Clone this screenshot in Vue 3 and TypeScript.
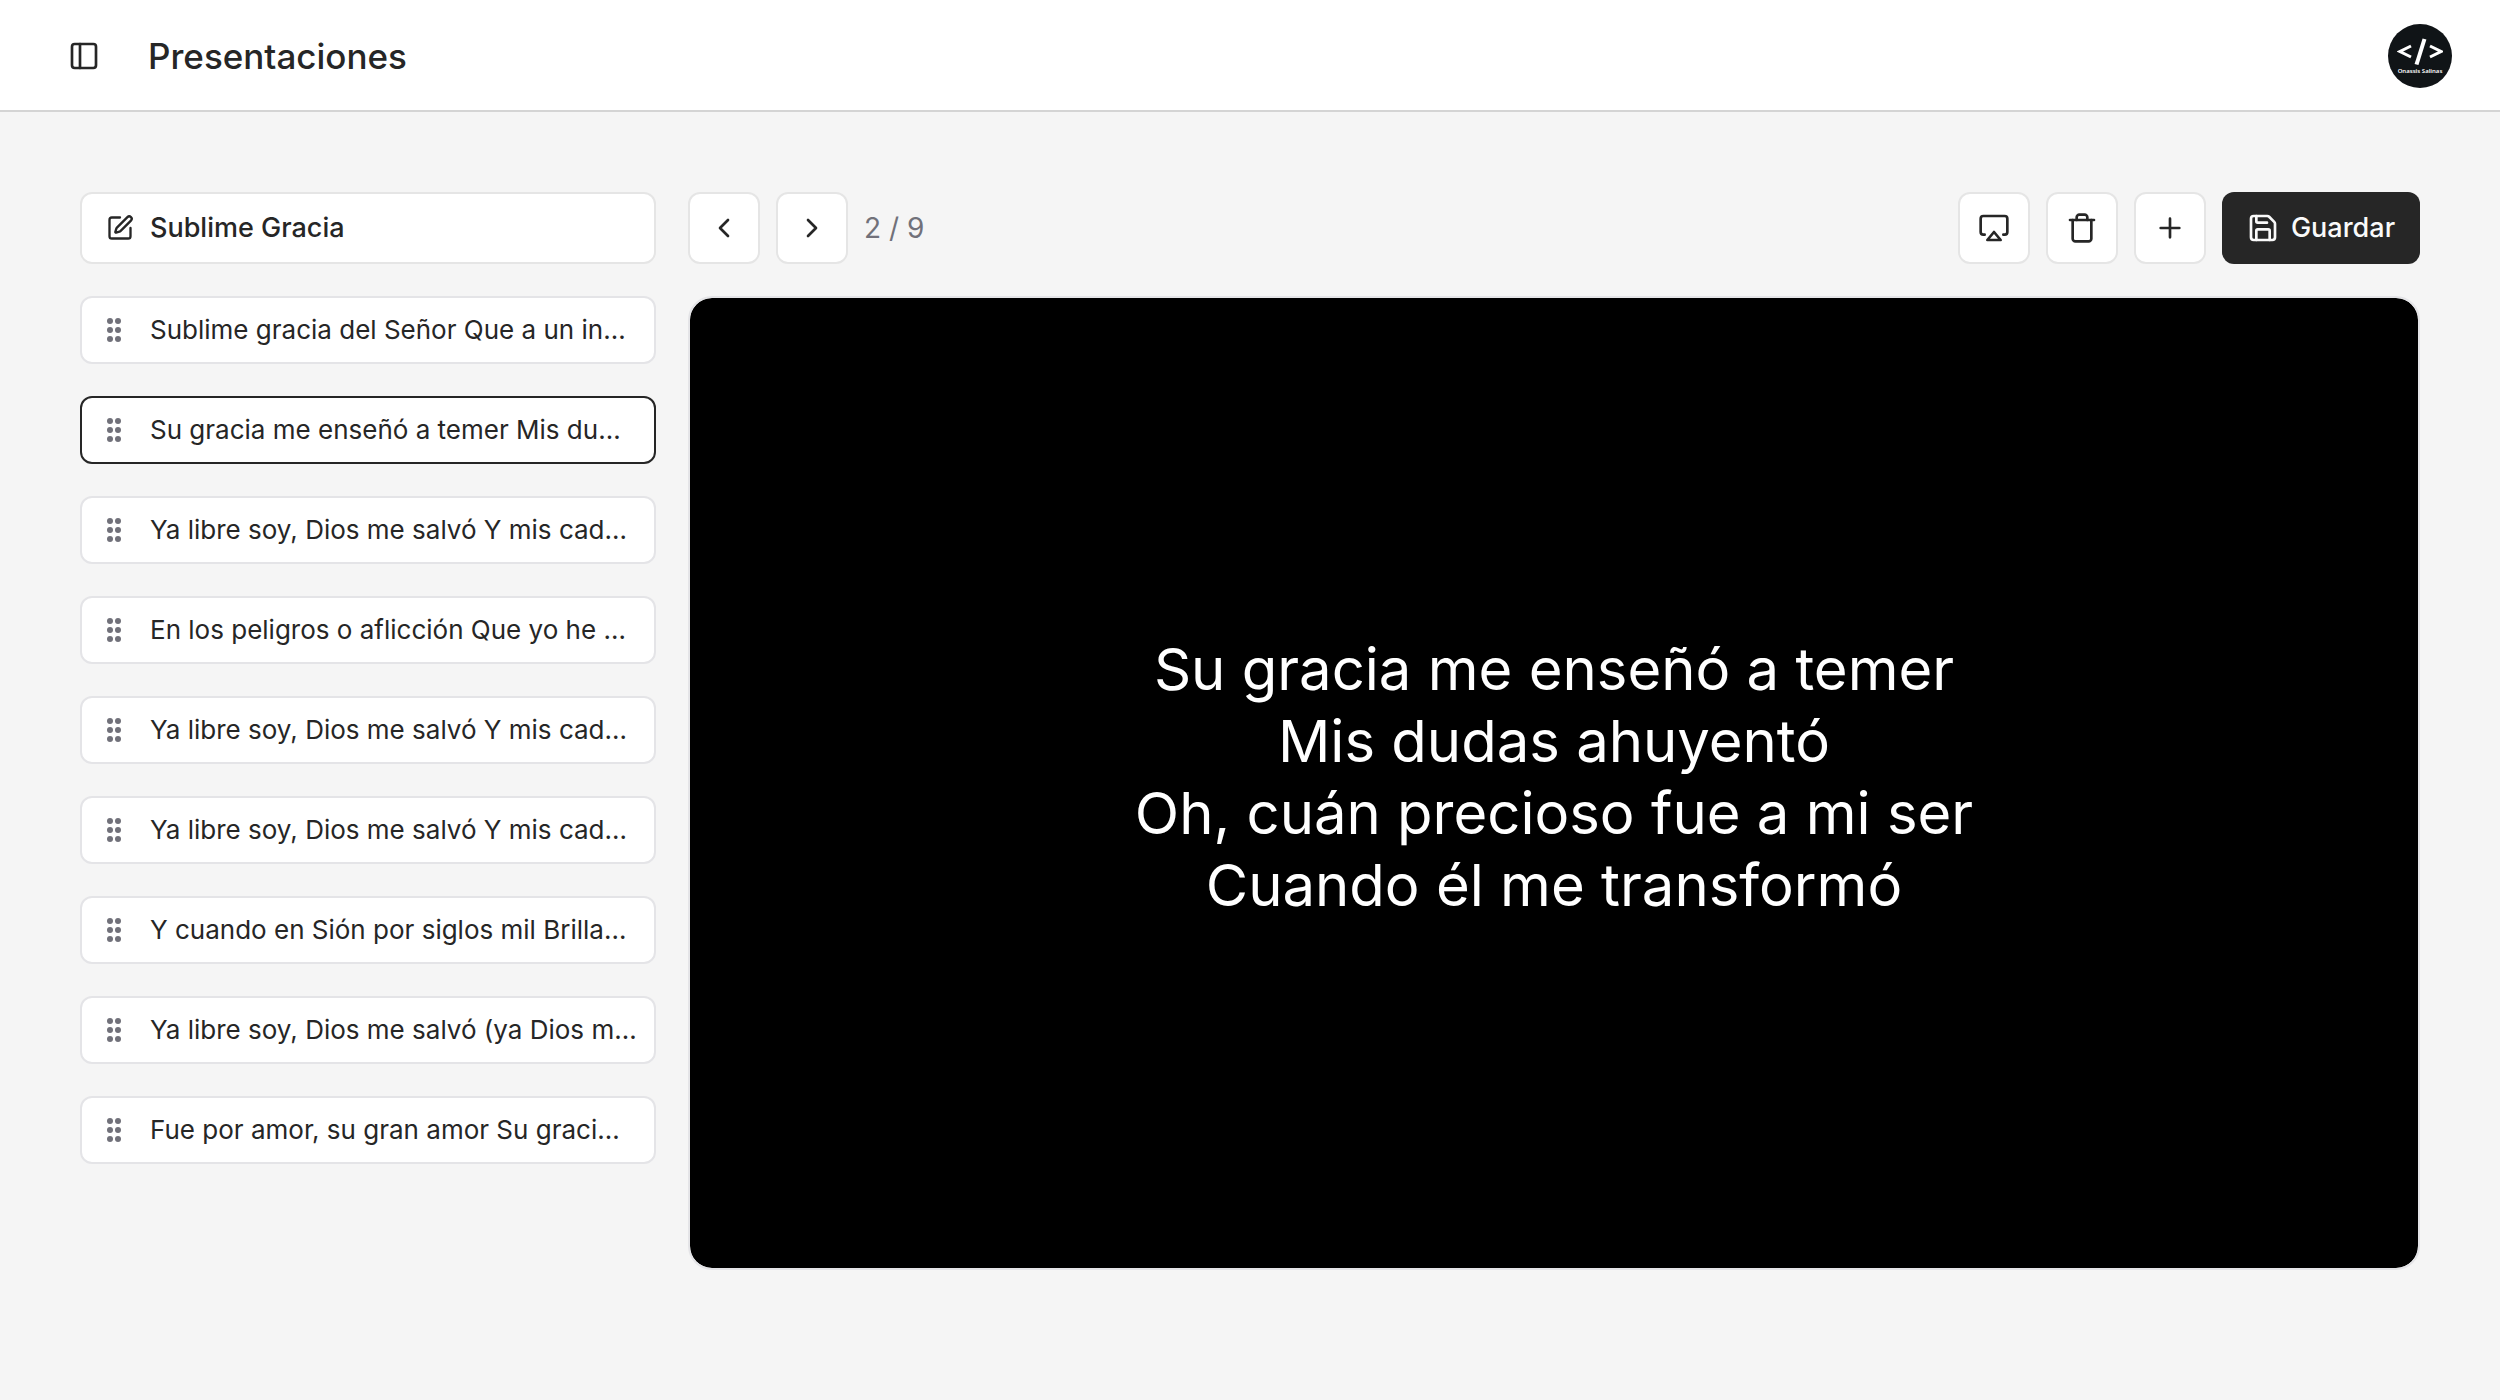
<script setup lang="ts">
import { computed, ref } from 'vue'

interface Slide {
  id: number
  summary: string
  lines: string[]
}

const chorus = ['Ya libre soy, Dios me salvó', 'Y mis cadenas ya rompió']

const slides: Slide[] = [
  { id: 1, summary: 'Sublime gracia del Señor Que a un in…', lines: ['Sublime gracia del Señor'] },
  {
    id: 2,
    summary: 'Su gracia me enseñó a temer Mis du…',
    lines: [
      'Su gracia me enseñó a temer',
      'Mis dudas ahuyentó',
      'Oh, cuán precioso fue a mi ser',
      'Cuando él me transformó',
    ],
  },
  { id: 3, summary: 'Ya libre soy, Dios me salvó Y mis cad…', lines: chorus },
  { id: 4, summary: 'En los peligros o aflicción Que yo he …', lines: ['En los peligros o aflicción'] },
  { id: 5, summary: 'Ya libre soy, Dios me salvó Y mis cad…', lines: chorus },
  { id: 6, summary: 'Ya libre soy, Dios me salvó Y mis cad…', lines: chorus },
  { id: 7, summary: 'Y cuando en Sión por siglos mil Brilla…', lines: ['Y cuando en Sión por siglos mil'] },
  { id: 8, summary: 'Ya libre soy, Dios me salvó (ya Dios m…', lines: chorus },
  { id: 9, summary: 'Fue por amor, su gran amor Su graci…', lines: ['Fue por amor, su gran amor'] },
]

const current = ref(1)
const slide = computed(() => slides[current.value])

function go(step: number) {
  current.value = Math.min(slides.length - 1, Math.max(0, current.value + step))
}
</script>

<template>
  <div class="app">
    <header class="topbar">
      <button class="toggle" type="button" aria-label="Alternar menú">
        <svg class="icon" viewBox="0 0 24 24"><rect width="18" height="18" x="3" y="3" rx="2" /><path d="M9 3v18" /></svg>
      </button>
      <h1>Presentaciones</h1>
      <button class="avatar" type="button" aria-label="Cuenta">
        <svg class="code" viewBox="0 0 46 28"><path d="M14 8 3 13.500 14 19M33 8 44 13.500 33 19" /><path class="slash" d="M27.500 1 19.500 26.500" /></svg>
        <span>Onassis Salinas</span>
      </button>
    </header>

    <main class="content">
      <aside class="sidebar">
        <button class="card name" type="button">
          <svg class="icon small" viewBox="0 0 24 24"><path d="M12 3H5a2 2 0 0 0-2 2v14a2 2 0 0 0 2 2h14a2 2 0 0 0 2-2v-7" /><path d="M18.375 2.625a1 1 0 0 1 3 3l-9.013 9.014a2 2 0 0 1-.853.505l-2.873.84a.5.5 0 0 1-.62-.62l.84-2.873a2 2 0 0 1 .506-.852z" /></svg>
          <span>Sublime Gracia</span>
        </button>
        <ul class="slides">
          <li v-for="(item, index) in slides" :key="item.id">
            <button class="card slide" :class="{ active: index === current }" type="button" @click="current = index">
              <svg class="grip" viewBox="0 0 16 28">
                <circle v-for="n in 6" :key="n" :cx="n % 2 ? 4 : 12" :cy="5 + Math.floor((n - 1) / 2) * 9" r="3" />
              </svg>
              <span>{{ item.summary }}</span>
            </button>
          </li>
        </ul>
      </aside>

      <section class="editor">
        <div class="toolbar">
          <button class="square" type="button" aria-label="Anterior" @click="go(-1)">
            <svg class="icon" viewBox="0 0 24 24"><path d="m15 18-6-6 6-6" /></svg>
          </button>
          <button class="square" type="button" aria-label="Siguiente" @click="go(1)">
            <svg class="icon" viewBox="0 0 24 24"><path d="m9 18 6-6-6-6" /></svg>
          </button>
          <p class="counter">{{ current + 1 }} / {{ slides.length }}</p>
          <button class="square" type="button" aria-label="Presentar">
            <svg class="icon" viewBox="0 0 24 24"><path d="M5 17H4a2 2 0 0 1-2-2V5a2 2 0 0 1 2-2h16a2 2 0 0 1 2 2v10a2 2 0 0 1-2 2h-1" /><path d="m12 15 5 6H7Z" /></svg>
          </button>
          <button class="square" type="button" aria-label="Eliminar">
            <svg class="icon" viewBox="0 0 24 24"><path d="M3 6h18" /><path d="M19 6v14c0 1-1 2-2 2H7c-1 0-2-1-2-2V6" /><path d="M8 6V4c0-1 1-2 2-2h4c1 0 2 1 2 2v2" /></svg>
          </button>
          <button class="square" type="button" aria-label="Añadir">
            <svg class="icon" viewBox="0 0 24 24"><path d="M5 12h14M12 5v14" /></svg>
          </button>
          <button class="save" type="button">
            <svg class="icon" viewBox="0 0 24 24"><path d="M15.2 3a2 2 0 0 1 1.4.6l3.8 3.8a2 2 0 0 1 .6 1.4V19a2 2 0 0 1-2 2H5a2 2 0 0 1-2-2V5a2 2 0 0 1 2-2z" /><path d="M17 21v-7a1 1 0 0 0-1-1H8a1 1 0 0 0-1 1v7" /><path d="M7 3v4a1 1 0 0 0 1 1h7" /></svg>
            Guardar
          </button>
        </div>
        <div class="stage">
          <p><span v-for="line in slide.lines" :key="line">{{ line }}</span></p>
        </div>
      </section>
    </main>
  </div>
</template>

<style>
body {
  margin: 0;
  background: #f5f5f5;
}
</style>

<style scoped>
.app {
  min-height: 100vh;
  color: #262626;
  font-family: Inter, "Liberation Sans", sans-serif;
  font-size: 27px;
  line-height: 40px;
}

.app * {
  box-sizing: border-box;
}

button {
  display: flex;
  align-items: center;
  margin: 0;
  padding: 0;
  border: 0;
  color: inherit;
  font: inherit;
  text-align: left;
  cursor: pointer;
}

.icon {
  flex: none;
  width: 32px;
  height: 32px;
  fill: none;
  stroke: currentColor;
  stroke-width: 2;
  stroke-linecap: round;
  stroke-linejoin: round;
}

.icon.small {
  width: 28px;
  height: 28px;
}

.topbar {
  display: flex;
  align-items: center;
  height: 112px;
  padding: 2px 48px 0 68px;
  border-bottom: 2px solid #d4d4d4;
  background: #fff;
}

.toggle {
  background: none;
}

h1 {
  margin: 0 auto 0 48px;
  font-size: 35px;
  font-weight: 500;
}

.avatar {
  flex-direction: column;
  width: 64px;
  height: 64px;
  padding-top: 14px;
  border-radius: 50%;
  background: #101417;
  color: #fff;
}

.code {
  width: 46px;
  height: 28px;
  fill: none;
  stroke: #fff;
  stroke-width: 3;
}

.code .slash {
  stroke-width: 4;
}

.avatar span {
  font: 600 6px/10px "Noto Sans", sans-serif;
  white-space: nowrap;
}

.content {
  display: flex;
  gap: 32px;
  align-items: flex-start;
  padding: 80px;
}

.sidebar {
  display: flex;
  flex: 0 0 576px;
  flex-direction: column;
  gap: 32px;
  min-width: 0;
}

.slides {
  display: flex;
  flex-direction: column;
  gap: 32px;
  margin: 0;
  padding: 0;
  list-style: none;
}

.card {
  width: 100%;
  border: 2px solid #e5e5e5;
  border-radius: 12px;
  background: #fff;
  white-space: nowrap;
}

.name {
  gap: 16px;
  height: 72px;
  padding: 0 24px;
  font-weight: 500;
}

.slide {
  gap: 28px;
  height: 68px;
  padding: 0 16px 0 24px;
  border-color: #e4e4e7;
  font-size: 26px;
}

.slide.active {
  border-color: #262626;
}

.grip {
  flex: none;
  width: 16px;
  height: 28px;
  fill: #71717a;
}

.editor {
  display: flex;
  flex: 1;
  flex-direction: column;
  gap: 32px;
  min-width: 0;
}

.toolbar {
  display: flex;
  gap: 16px;
  align-items: center;
}

.square {
  justify-content: center;
  width: 72px;
  height: 72px;
  border: 2px solid #e5e5e5;
  border-radius: 12px;
  background: #fff;
}

.counter {
  margin: 0 auto 0 0;
  color: #71717a;
  font-size: 28px;
}

.save {
  gap: 12px;
  justify-content: center;
  min-width: 198px;
  height: 72px;
  padding: 0 24px;
  border-radius: 12px;
  background: #262626;
  color: #fafafa;
  font-weight: 500;
}

.stage {
  display: flex;
  align-items: center;
  justify-content: center;
  aspect-ratio: 16 / 9;
  padding-bottom: 12px;
  border: 2px solid #e4e4e7;
  border-radius: 24px;
  background: #000;
  background-clip: padding-box;
  color: #fff;
  font-size: 58px;
  line-height: 72px;
  text-align: center;
}

.stage p {
  margin: 0;
}

.stage span {
  display: block;
}
</style>
